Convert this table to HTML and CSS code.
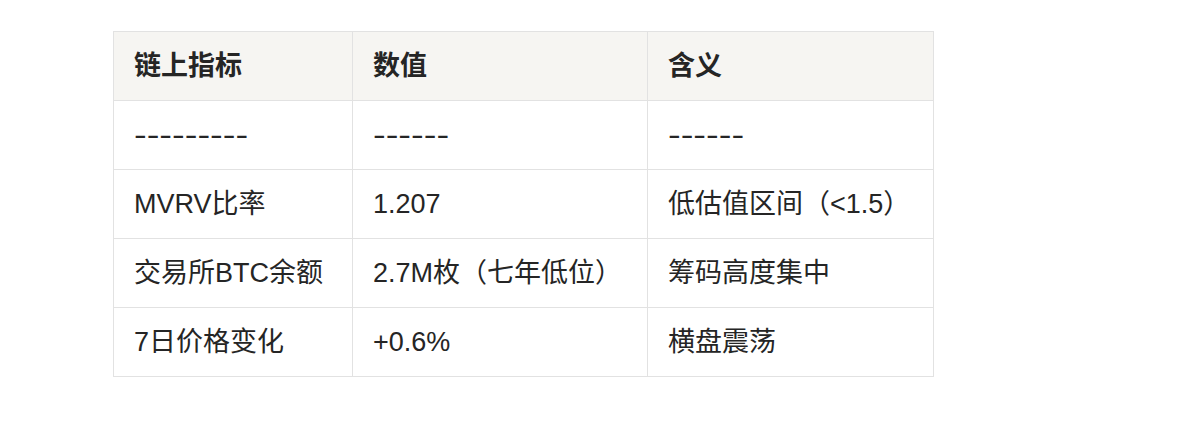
FILE: index.html
```html
<!DOCTYPE html>
<html lang="zh">
<head>
<meta charset="utf-8">
<link rel="stylesheet" href="styles.css">
</head>
<body>
<div class="page">
  <table class="data">
    <thead>
      <tr><th class="c1">链上指标</th><th class="c2">数值</th><th class="c3">含义</th></tr>
    </thead>
    <tbody>
      <tr><td><span class="dash">---------</span></td><td><span class="dash">------</span></td><td><span class="dash">------</span></td></tr>
      <tr><td>MVRV比率</td><td>1.207</td><td>低估值区间（&lt;1.5）</td></tr>
      <tr><td>交易所BTC余额</td><td>2.7M枚（七年低位）</td><td>筹码高度集中</td></tr>
      <tr><td>7日价格变化</td><td>+0.6%</td><td>横盘震荡</td></tr>
    </tbody>
  </table>
</div>
</body>
</html>
```

FILE: styles.css
```css
html, body {
  margin: 0;
  padding: 0;
  background: #ffffff;
}
.page {
  padding: 31px 0 0 113px;
}
.data {
  border-collapse: collapse;
  width: 820px;
  table-layout: fixed;
  font-family: "Liberation Sans", "Noto Sans CJK SC", sans-serif;
  font-size: 27px;
  color: #252525;
}
.data th, .data td {
  box-sizing: border-box;
  border: 1px solid #e2e2e2;
  height: 69px;
  padding: 0 10px 0 20px;
  text-align: left;
  vertical-align: middle;
  white-space: nowrap;
  line-height: 1.2;
}
.data th {
  background: #f6f5f2;
  font-weight: bold;
}
.c1 { width: 239px; }
.c2 { width: 295px; }
.c3 { width: 286px; }
.dash {
  display: inline-block;
  transform: scaleX(1.41);
  transform-origin: left center;
}
```
